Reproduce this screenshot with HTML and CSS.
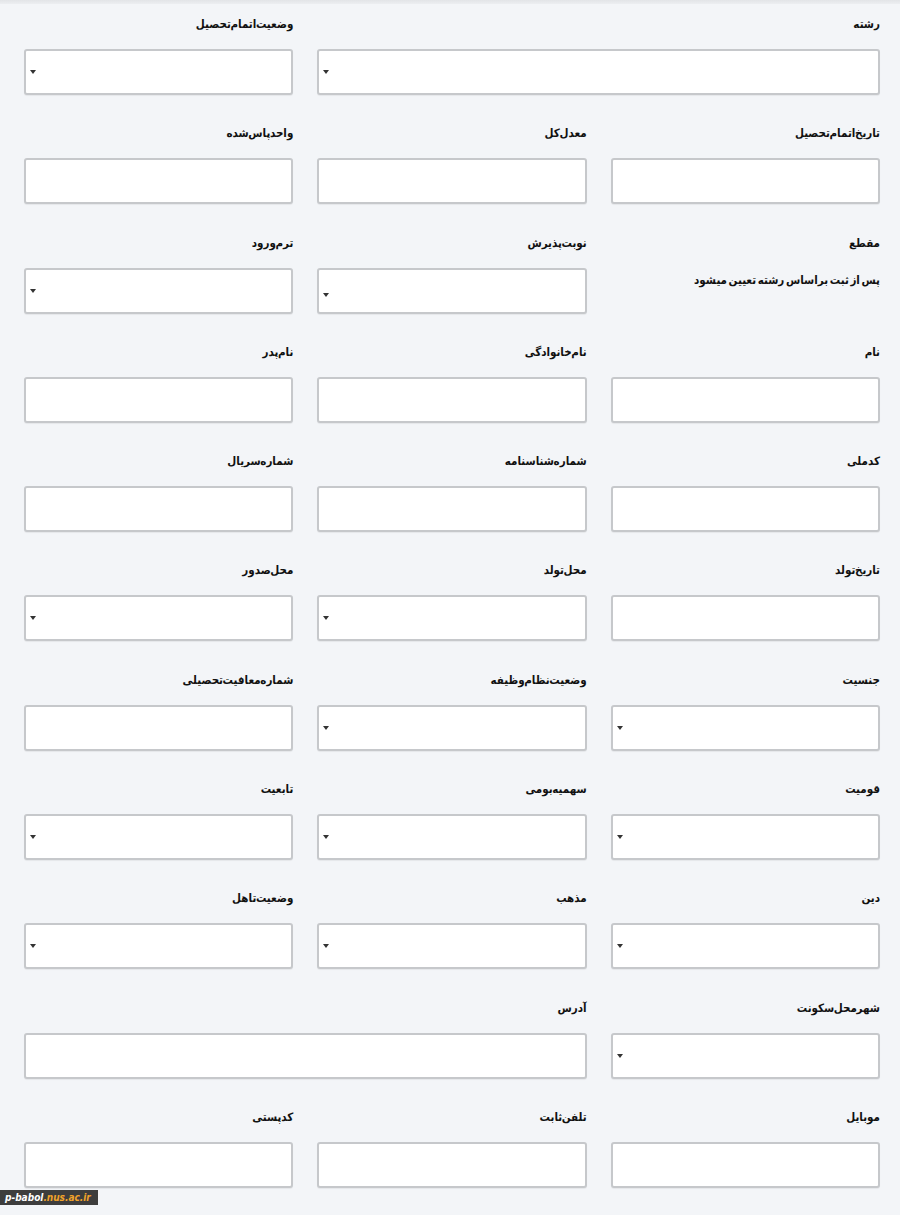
FILE: index.html
```html
<!DOCTYPE html>
<html lang="fa" dir="rtl">
<head>
<meta charset="utf-8">
<title>فرم اطلاعات دانشجو</title>
<link rel="stylesheet" href="styles.css">
</head>
<body>
<div class="topbar"></div>
<form class="form-grid">
  <div class="field span2"><label class="lbl">رشته</label><div class="box select"><span class="caret"></span></div></div>
  <div class="field"><label class="lbl">وضعیت اتمام تحصیل</label><div class="box select"><span class="caret"></span></div></div>

  <div class="field"><label class="lbl">تاریخ اتمام تحصیل</label><div class="box"></div></div>
  <div class="field"><label class="lbl">معدل کل</label><div class="box"></div></div>
  <div class="field"><label class="lbl">واحد پاس شده</label><div class="box"></div></div>

  <div class="field"><label class="lbl">مقطع</label><div class="note">پس از ثبت براساس رشته تعیین میشود</div></div>
  <div class="field"><label class="lbl">نوبت پذیرش</label><div class="box select"><span class="caret low"></span></div></div>
  <div class="field"><label class="lbl">ترم ورود</label><div class="box select"><span class="caret"></span></div></div>

  <div class="field"><label class="lbl">نام</label><div class="box"></div></div>
  <div class="field"><label class="lbl">نام خانوادگی</label><div class="box"></div></div>
  <div class="field"><label class="lbl">نام پدر</label><div class="box"></div></div>

  <div class="field"><label class="lbl">کدملی</label><div class="box"></div></div>
  <div class="field"><label class="lbl">شماره شناسنامه</label><div class="box"></div></div>
  <div class="field"><label class="lbl">شماره سریال</label><div class="box"></div></div>

  <div class="field"><label class="lbl">تاریخ تولد</label><div class="box"></div></div>
  <div class="field"><label class="lbl">محل تولد</label><div class="box select"><span class="caret"></span></div></div>
  <div class="field"><label class="lbl">محل صدور</label><div class="box select"><span class="caret"></span></div></div>

  <div class="field"><label class="lbl">جنسیت</label><div class="box select"><span class="caret"></span></div></div>
  <div class="field"><label class="lbl">وضعیت نظام وظیفه</label><div class="box select"><span class="caret"></span></div></div>
  <div class="field"><label class="lbl">شماره معافیت تحصیلی</label><div class="box"></div></div>

  <div class="field"><label class="lbl">قومیت</label><div class="box select"><span class="caret"></span></div></div>
  <div class="field"><label class="lbl">سهمیه بومی</label><div class="box select"><span class="caret"></span></div></div>
  <div class="field"><label class="lbl">تابعیت</label><div class="box select"><span class="caret"></span></div></div>

  <div class="field"><label class="lbl">دین</label><div class="box select"><span class="caret"></span></div></div>
  <div class="field"><label class="lbl">مذهب</label><div class="box select"><span class="caret"></span></div></div>
  <div class="field"><label class="lbl">وضعیت تاهل</label><div class="box select"><span class="caret"></span></div></div>

  <div class="field"><label class="lbl">شهر محل سکونت</label><div class="box select"><span class="caret"></span></div></div>
  <div class="field span2"><label class="lbl">آدرس</label><div class="box"></div></div>

  <div class="field"><label class="lbl">موبایل</label><div class="box"></div></div>
  <div class="field"><label class="lbl">تلفن ثابت</label><div class="box"></div></div>
  <div class="field"><label class="lbl">کدپستی</label><div class="box"></div></div>
</form>
<div class="watermark" dir="ltr"><span class="wm-a">p-babol</span><span class="wm-b">.nus.ac.ir</span></div>
</body>
</html>
```

FILE: styles.css
```css
html, body {
  margin: 0;
  padding: 0;
}
body {
  background: #f3f5f8;
  font-family: "DejaVu Sans Condensed", "DejaVu Sans", sans-serif;
  color: #111;
  position: relative;
  min-height: 1215px;
}
.topbar {
  height: 4px;
  background: linear-gradient(#e2e4e7, #eceef1);
}
.form-grid {
  display: grid;
  grid-template-columns: repeat(3, 1fr);
  column-gap: 24px;
  row-gap: 28.3px;
  padding: 10px 20px 0 24px;
  margin: 0;
}
.field {
  display: flex;
  flex-direction: column;
}
.span2 {
  grid-column: span 2;
}
.lbl {
  display: block;
  height: 20px;
  line-height: 20px;
  margin-bottom: 15px;
  font-size: 11.5px;
  font-weight: bold;
  word-spacing: -4px;
  color: #111;
}
.box {
  position: relative;
  height: 46px;
  box-sizing: border-box;
  background: #fff;
  border: 2px solid #c6c8cb;
  border-radius: 3px;
  box-shadow: 0 1px 1px rgba(0,0,0,0.06);
}
.caret {
  position: absolute;
  left: 4px;
  top: 19px;
  width: 0;
  height: 0;
  border-left: 3px solid transparent;
  border-right: 3px solid transparent;
  border-top: 4px solid #333;
}
.caret.low {
  top: 23px;
}
.note {
  font-size: 11.5px;
  font-weight: bold;
  line-height: 20px;
  margin-top: 2px;
  word-spacing: -2px;
  color: #111;
}
.watermark {
  position: absolute;
  left: 0;
  top: 1190px;
  width: 98px;
  height: 15px;
  background: #3d3d3d;
  font-family: "DejaVu Sans Condensed", "DejaVu Sans", sans-serif;
  font-size: 10px;
  font-weight: bold;
  font-style: italic;
  line-height: 15px;
  padding-left: 5px;
  box-sizing: border-box;
  white-space: nowrap;
}
.wm-a {
  color: #ffffff;
}
.wm-b {
  color: #f0a22a;
}
```
